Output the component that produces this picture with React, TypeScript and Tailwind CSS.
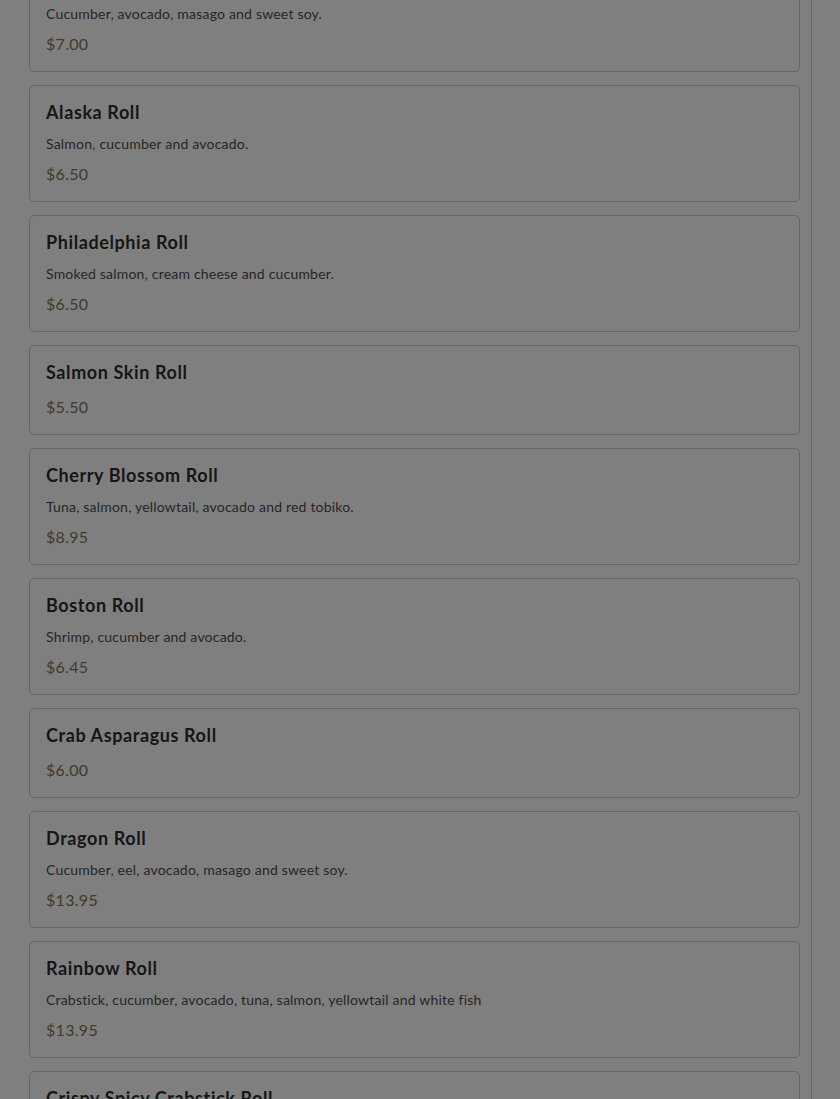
import React from "react";

type Item = { name: string; desc?: string; price: string };

const items: Item[] = [
  { name: "Dragon Roll", desc: "Cucumber, avocado, masago and sweet soy.", price: "$7.00" },
  { name: "Alaska Roll", desc: "Salmon, cucumber and avocado.", price: "$6.50" },
  { name: "Philadelphia Roll", desc: "Smoked salmon, cream cheese and cucumber.", price: "$6.50" },
  { name: "Salmon Skin Roll", price: "$5.50" },
  { name: "Cherry Blossom Roll", desc: "Tuna, salmon, yellowtail, avocado and red tobiko.", price: "$8.95" },
  { name: "Boston Roll", desc: "Shrimp, cucumber and avocado.", price: "$6.45" },
  { name: "Crab Asparagus Roll", price: "$6.00" },
  { name: "Dragon Roll", desc: "Cucumber, eel, avocado, masago and sweet soy.", price: "$13.95" },
  { name: "Rainbow Roll", desc: "Crabstick, cucumber, avocado, tuna, salmon, yellowtail and white fish", price: "$13.95" },
  { name: "Crispy Spicy Crabstick Roll", desc: "Crabstick, spicy mayo and tempura flakes.", price: "$8.95" },
];

export default function App() {
  return (
    <div
      className="w-[840px] h-[1099px] overflow-hidden bg-[#7f7f7f]"
      style={{ fontFamily: "Lato, 'Noto Sans', sans-serif" }}
    >
      <div className="w-[812px] h-full border-r border-[#6b6b6b] flex flex-col">
        <div className="mt-[-45px] pl-[29px] pr-[11px] flex flex-col gap-[13px]">
          {items.map((it, i) => (
            <div
              key={i}
              className="border border-[#666666] rounded-[5px] px-4 pt-[15px] pb-[15px]"
            >
              <div
                className={
                  it.desc
                    ? "text-[18px] leading-[22px] font-bold tracking-[0.6px] text-[#161616] mb-[11px]"
                    : "text-[18px] leading-[22px] font-bold tracking-[0.6px] text-[#161616] mb-[12px]"
                }
              >
                {it.name}
              </div>
              {it.desc && (
                <div className="text-[14px] leading-[20px] tracking-[0.2px] text-[#262626] mb-[8px]">
                  {it.desc}
                </div>
              )}
              <div className="text-[16px] leading-[24px] tracking-[0.3px] text-[#403a2c]">{it.price}</div>
            </div>
          ))}
        </div>
      </div>
    </div>
  );
}
